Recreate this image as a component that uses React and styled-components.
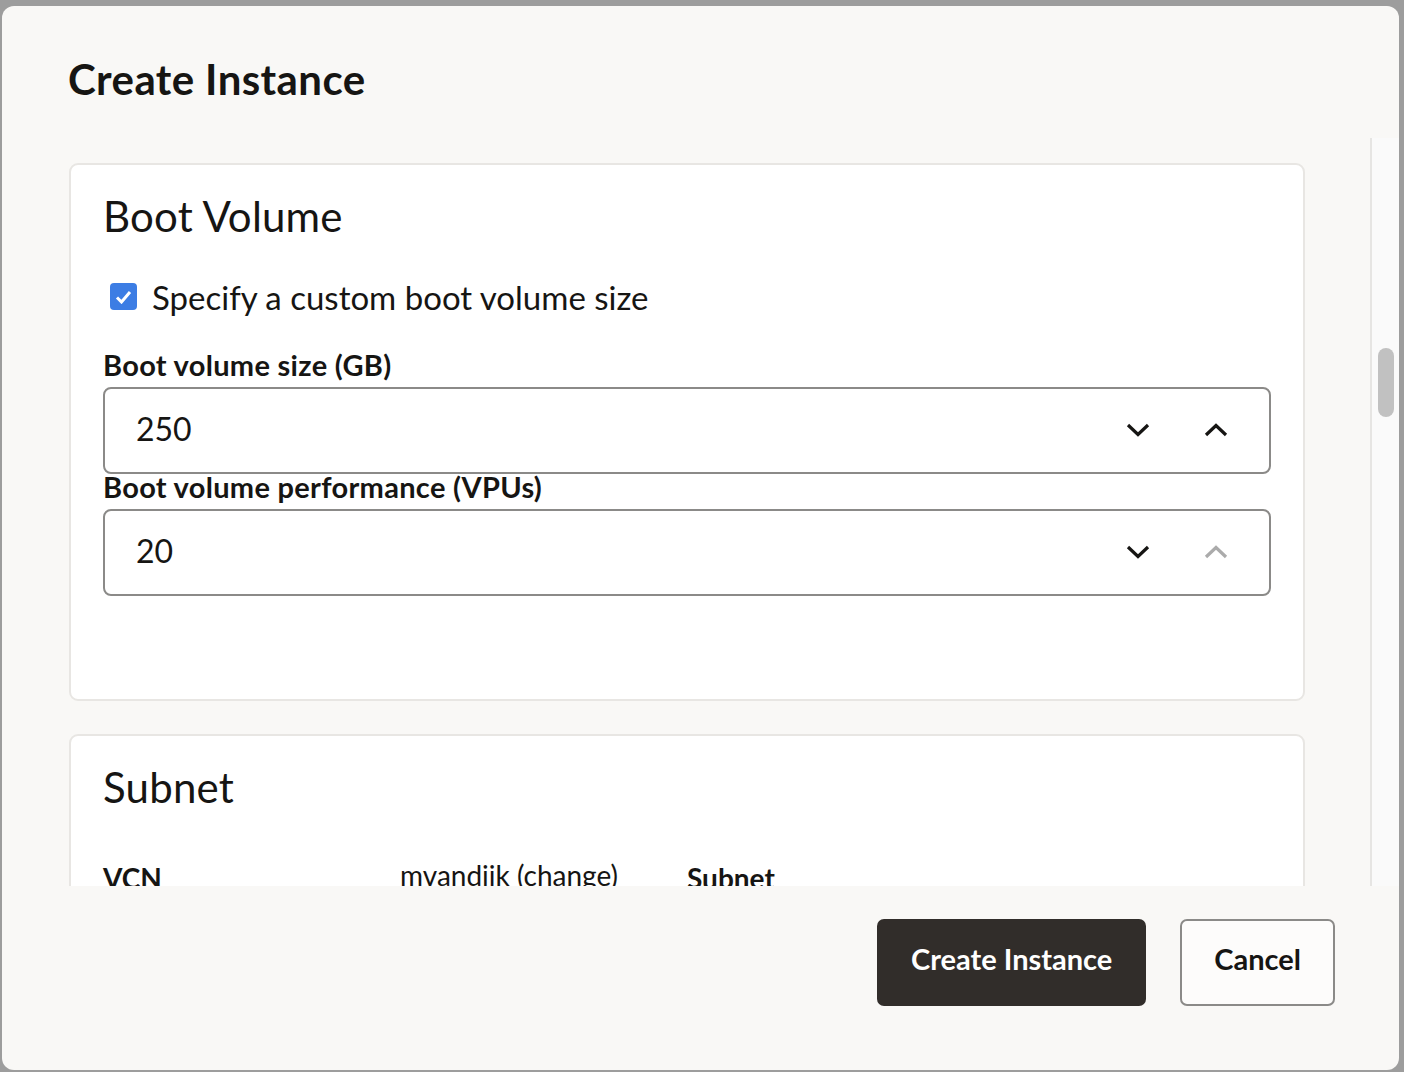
import React from "react";
import styled, { createGlobalStyle } from "styled-components";

const Global = createGlobalStyle`
  html, body { margin: 0; padding: 0; }
  body {
    background: #9d9d9d;
    font-family: Lato, "Liberation Sans", sans-serif;
    color: #161513;
  }
  * { box-sizing: border-box; }
`;

const Dialog = styled.div`
  margin: 6px 5px 0 2px;
  height: 1064px;
  background: #f9f8f6;
  border-radius: 12px;
  display: flex;
  flex-direction: column;
  overflow: hidden;
`;

const Header = styled.header`
  padding: 48px 66px 34px;
`;

const Title = styled.h1`
  margin: 0;
  font-size: 42px;
  line-height: 1.2;
  font-weight: 700;
  letter-spacing: 0.4px;
`;

const ScrollArea = styled.div`
  display: flex;
  height: 748px;
`;

const Content = styled.div`
  flex: 1;
  overflow: hidden;
  padding: 25px 65px 0 67px;
  display: flex;
  flex-direction: column;
  gap: 33px;
`;

const Track = styled.div`
  width: 29px;
  border-left: 2px solid #e6e5e3;
  background: #fafafa;
  padding: 210px 0 0 6px;
`;

const Thumb = styled.div`
  width: 16px;
  height: 69px;
  border-radius: 8px;
  background: #c1c1c1;
`;

const Card = styled.section`
  background: #fff;
  border: 2px solid #e8e6e3;
  border-radius: 9px;
  padding: 26px 32px ${(p) => p.$bottom}px;
  flex-shrink: 0;
`;

const CardTitle = styled.h2`
  margin: 0;
  font-size: 42px;
  line-height: 1.2;
  font-weight: 400;
  letter-spacing: 0.2px;
`;

const CheckRow = styled.label`
  display: flex;
  align-items: center;
  gap: 15px;
  margin-top: 35px;
  padding-left: 7px;
  font-size: 33px;
  line-height: 40px;
`;

const Box = styled.span`
  width: 27px;
  height: 27px;
  border-radius: 4px;
  background: #3c7de4;
  display: inline-flex;
  align-items: center;
  justify-content: center;
  flex-shrink: 0;
`;

const Fields = styled.div`
  margin-top: 33px;
  display: flex;
  flex-direction: column;
`;

const FieldLabel = styled.div`
  font-size: 29px;
  line-height: 30px;
  font-weight: 700;
  letter-spacing: 0.3px;
  margin-bottom: 7px;
`;

const Input = styled.div`
  height: 87px;
  border: 2px solid #8b8a88;
  border-radius: 8px;
  display: flex;
  align-items: center;
  padding: 0 14px 0 31px;
  margin-bottom: ${(p) => (p.$last ? 0 : -2)}px;
`;

const Value = styled.span`
  flex: 1;
  font-size: 32px;
  margin-bottom: 4px;
`;

const Spin = styled.span`
  width: 78px;
  display: flex;
  justify-content: center;
  align-items: center;
  color: ${(p) => (p.$disabled ? "#ababab" : "#161513")};
`;

const InfoRow = styled.div`
  margin-top: 50px;
  display: grid;
  grid-template-columns: 297px 287px auto;
  font-size: 28px;
  line-height: 32px;
`;

const InfoLabel = styled.span`
  font-weight: 700;
`;

const InfoValue = styled.span`
  font-weight: 400;
  margin-top: -3px;
`;

const Footer = styled.footer`
  flex: 1;
  display: flex;
  justify-content: flex-end;
  align-items: flex-start;
  gap: 34px;
  padding: 33px 64px 0 0;
`;

const Button = styled.button`
  height: 87px;
  padding: 0 ${(p) => p.$pad}px 8px;
  border-radius: 7px;
  font-family: Lato, "Liberation Sans", sans-serif;
  font-size: 29px;
  font-weight: 700;
  cursor: pointer;
  background: ${(p) => (p.$primary ? "#312d2a" : "#fdfcfb")};
  color: ${(p) => (p.$primary ? "#ffffff" : "#161513")};
  border: ${(p) => (p.$primary ? "none" : "2px solid #8b8a88")};
`;

const Chevron = ({ up }) => (
  <svg width="24" height="14" viewBox="0 0 24 14" fill="none">
    <polyline
      points={up ? "2,12 12,2.5 22,12" : "2,2 12,11.5 22,2"}
      stroke="currentColor"
      strokeWidth="3.2"
      strokeLinecap="butt"
      strokeLinejoin="miter"
    />
  </svg>
);

const NumberField = ({ label, value, upDisabled, last }) => (
  <>
    <FieldLabel>{label}</FieldLabel>
    <Input $last={last}>
      <Value>{value}</Value>
      <Spin>
        <Chevron />
      </Spin>
      <Spin $disabled={upDisabled}>
        <Chevron up />
      </Spin>
    </Input>
  </>
);

export default function App() {
  return (
    <>
      <Global />
      <Dialog>
        <Header>
          <Title>Create Instance</Title>
        </Header>
        <ScrollArea>
          <Content>
            <Card $bottom={103}>
              <CardTitle>Boot Volume</CardTitle>
              <CheckRow>
                <Box>
                  <svg width="17" height="14" viewBox="0 0 17 14" fill="none">
                    <polyline
                      points="2,7.5 6.5,12 15,2"
                      stroke="#fff"
                      strokeWidth="3"
                    />
                  </svg>
                </Box>
                Specify a custom boot volume size
              </CheckRow>
              <Fields>
                <NumberField label="Boot volume size (GB)" value="250" />
                <NumberField
                  label="Boot volume performance (VPUs)"
                  value="20"
                  upDisabled
                  last
                />
              </Fields>
            </Card>
            <Card $bottom={60}>
              <CardTitle>Subnet</CardTitle>
              <InfoRow>
                <InfoLabel>VCN</InfoLabel>
                <InfoValue>mvandijk (change)</InfoValue>
                <InfoLabel>Subnet</InfoLabel>
              </InfoRow>
            </Card>
          </Content>
          <Track>
            <Thumb />
          </Track>
        </ScrollArea>
        <Footer>
          <Button $primary $pad={34}>Create Instance</Button>
          <Button $pad={32}>Cancel</Button>
        </Footer>
      </Dialog>
    </>
  );
}
